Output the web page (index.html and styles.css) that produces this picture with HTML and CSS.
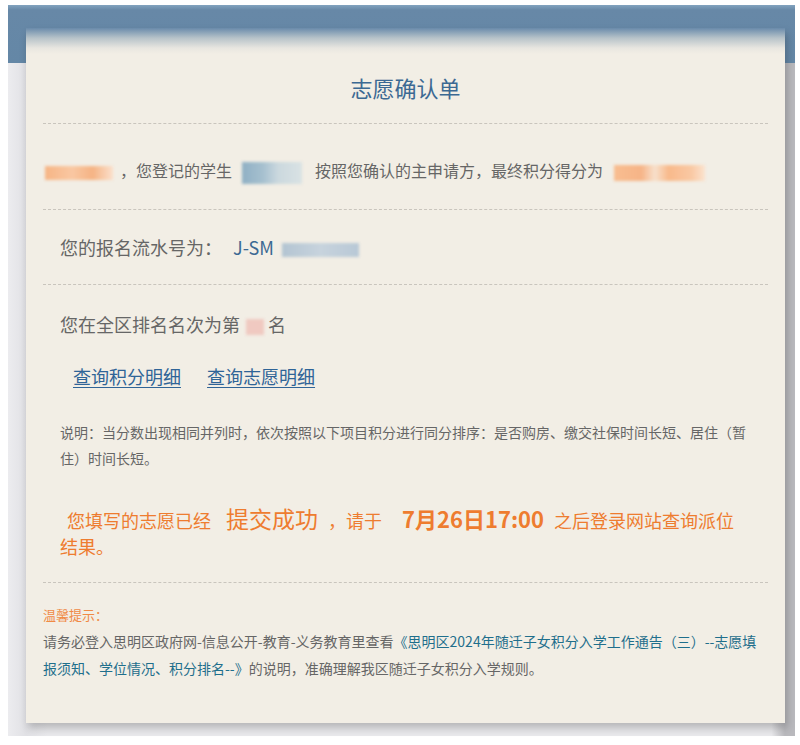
FILE: index.html
```html
<!DOCTYPE html>
<html lang="zh-CN">
<head>
    <meta charset="UTF-8">
    <meta name="viewport" content="width=device-width, initial-scale=1.0">
    <title>志愿确认单</title>
    <link rel="stylesheet" href="styles.css">
</head>
<body>
    <div class="page">
        <div class="card">
            <h1 class="card-title">志愿确认单</h1>

            <div class="row row-score">
                <span class="mask mask-name"></span>，您登记的学生<span class="mask mask-student"></span>按照您确认的主申请方，最终积分得分为<span class="mask mask-score"></span>
            </div>

            <div class="row row-serial">
                您的报名流水号为：<span class="serial">J-SM<span class="mask mask-serial"></span></span>
            </div>

            <div class="section">
                <p class="rank">您在全区排名名次为第<span class="mask mask-rank"></span>名</p>
                <p class="links">
                    <a href="#">查询积分明细</a>
                    <a href="#">查询志愿明细</a>
                </p>
                <p class="note">说明：当分数出现相同并列时，依次按照以下项目积分进行同分排序：是否购房、缴交社保时间长短、居住（暂住）时间长短。</p>
                <p class="result">
                    <span class="indent">您填写的志愿已经</span><span class="big">提交成功</span>，请于<span class="big date">7月26日17:00</span>之后登录网站查询派位结果。
                </p>
            </div>

            <div class="tips">
                <p class="tips-title">温馨提示：</p>
                <p class="tips-text">请务必登入思明区政府网-信息公开-教育-义务教育里查看<a href="#">《思明区2024年随迁子女积分入学工作通告（三）--志愿填报须知、学位情况、积分排名--》</a>的说明，准确理解我区随迁子女积分入学规则。</p>
            </div>
        </div>
    </div>
</body>
</html>
```

FILE: styles.css
```css
body {
    margin: 0;
    background-color: #fff;
    font-family: "Noto Sans CJK SC", "Noto Sans", sans-serif;
    color: #666;
}

.page {
    margin: 5px 5px 10px 8px;
    padding: 23px 10px 13px 18px;
    background:
        linear-gradient(#82a3bf, #6788a7 5px, #6487a6 58px, transparent 58px),
        linear-gradient(to right, #ececef, #e1e1e5 18px, #e9e9ec 40px, #e9e9ec 97%, #b9b9bd 98.7%);
}

.card {
    padding: 0 17px;
    background: linear-gradient(#6a8bab 0, #b7c3c9 10px, #e8e6e0 20px, #f2eee5 26px);
    box-shadow: 2px 5px 8px rgba(0, 0, 0, 0.22);
}

.card-title {
    margin: 0;
    padding: 44px 0 21px;
    font-size: 22px;
    font-weight: normal;
    line-height: 30px;
    text-align: center;
    color: #3c6993;
    border-bottom: 1px dashed #c9c5bd;
}

.row {
    border-bottom: 1px dashed #c9c5bd;
    line-height: 24px;
}

.row-score {
    padding: 34px 0 25px;
    font-size: 16px;
}

.row-serial {
    padding: 25px 0 25px 17px;
    font-size: 18px;
}

.serial {
    margin-left: 11px;
    color: #3c6993;
}

.mask {
    display: inline-block;
    vertical-align: middle;
    filter: blur(1.5px);
}

.mask-name {
    width: 68px;
    height: 14px;
    margin: 0 7px 0 2px;
    background: linear-gradient(to right, #f6b585, #f9c7a2 40%, #f5b384 70%, #fbe0cc);
}

.mask-student {
    width: 60px;
    height: 22px;
    margin: 0 13px 0 10px;
    background: linear-gradient(to right, #8fb0c4, #a6c0cf 35%, #cbd8de 60%, #d9e2e4);
}

.mask-score {
    width: 91px;
    height: 16px;
    margin-left: 11px;
    background: linear-gradient(to right, #f8bd90, #f6b487 30%, #f7e0cc 45%, #f8b98b 60%, #f9c8a3 85%, #fbe3cf);
}

.mask-serial {
    width: 77px;
    height: 14px;
    margin-left: 8px;
    background: linear-gradient(to right, #b3c4d2, #c7d3dd 50%, #b8c8d6);
}

.mask-rank {
    width: 18px;
    height: 16px;
    margin: 0 4px 0 6px;
    background: #f0c9c1;
}

.section {
    padding: 27px 17px 23px;
    border-bottom: 1px dashed #c9c5bd;
}

.section p {
    margin: 0;
}

.rank {
    font-size: 18px;
    line-height: 24px;
}

.links {
    margin-top: 28px !important;
    padding-left: 13px;
    font-size: 18px;
    line-height: 24px;
}

.links a {
    margin-right: 22px;
    color: #2f6497;
    text-decoration: underline;
    text-underline-offset: 3px;
}

.note {
    width: 690px;
    margin-top: 31px !important;
    font-size: 14px;
    line-height: 26px;
}

.result {
    margin-top: 36px !important;
    font-size: 18px;
    line-height: 26px;
    color: #ee7c2f;
}

.indent {
    margin-left: 7px;
}

.big {
    margin: 0 10px 0 15px;
    font-size: 23px;
    line-height: 20px;
}

.date {
    margin: 0 10px 0 20px;
    font-weight: bold;
    font-size: 22px;
}

.tips {
    padding: 19px 0 41px;
}

.tips p {
    margin: 0;
}

.tips-title {
    font-size: 13px;
    line-height: 26px;
    color: #f08a45;
}

.tips-text {
    font-size: 14px;
    line-height: 27px;
}

.tips-text a {
    color: #1f6f8c;
    text-decoration: none;
}
```
